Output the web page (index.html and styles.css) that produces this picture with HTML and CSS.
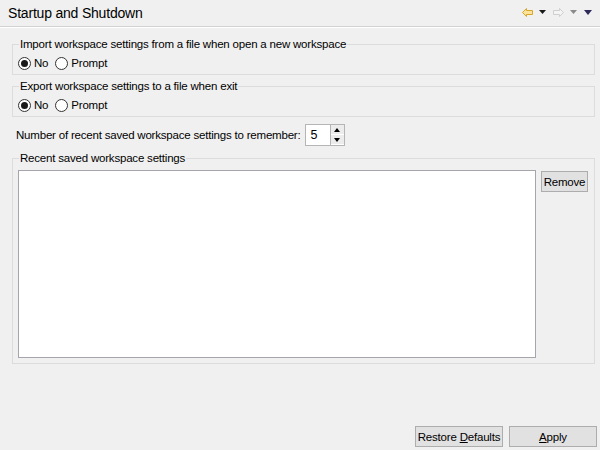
FILE: index.html
```html
<!DOCTYPE html>
<html lang="en">

<head>
    <meta charset="UTF-8">
    <title>Startup and Shutdown</title>
    <link rel="stylesheet" href="styles.css">
</head>

<body>
    <div class="page">
        <div class="header">
            <div class="title">Startup and Shutdown</div>
            <div class="nav">
                <svg width="11" height="9" viewBox="0 0 11 9">
                    <path d="M0.5 4.5 L4.5 0.5 V2.5 H10.5 V6.5 H4.5 V8.5 Z" fill="#fbe39a" stroke="#d9a62c" stroke-width="1"/>
                </svg>
                <svg class="drop" width="7" height="4" viewBox="0 0 7 4"><path d="M0 0 H7 L3.5 4 Z" fill="#1a1a1a"/></svg>
                <svg width="11" height="9" viewBox="0 0 11 9">
                    <path d="M10.5 4.5 L6.5 0.5 V2.5 H0.5 V6.5 H6.5 V8.5 Z" fill="#f4f4f4" stroke="#cfcfcf" stroke-width="1"/>
                </svg>
                <svg class="drop" width="7" height="4" viewBox="0 0 7 4"><path d="M0 0 H7 L3.5 4 Z" fill="#8a8a8a"/></svg>
                <svg class="drop" width="8" height="5" viewBox="0 0 8 5"><path d="M0 0 H8 L4 5 Z" fill="#2d2a5a"/></svg>
            </div>
        </div>

        <div class="content">
            <fieldset class="group">
                <legend>Import workspace settings from a file when open a new workspace</legend>
                <div class="radios">
                    <label><input type="radio" name="import" checked> No</label>
                    <label><input type="radio" name="import"> Prompt</label>
                </div>
            </fieldset>

            <fieldset class="group">
                <legend>Export workspace settings to a file when exit</legend>
                <div class="radios">
                    <label><input type="radio" name="export" checked> No</label>
                    <label><input type="radio" name="export"> Prompt</label>
                </div>
            </fieldset>

            <div class="remember">
                <span>Number of recent saved workspace settings to remember:</span>
                <div class="spinner">
                    <div class="spin-value">5</div>
                    <div class="spin-arrows">
                        <div class="spin-btn"><span class="up"></span></div>
                        <div class="spin-btn"><span class="down"></span></div>
                    </div>
                </div>
            </div>

            <fieldset class="group recent">
                <legend>Recent saved workspace settings</legend>
                <div class="recent-body">
                    <div class="list"></div>
                    <button class="btn remove">Remove</button>
                </div>
            </fieldset>
        </div>

        <div class="footer">
            <button class="btn wide">Restore <u>D</u>efaults</button>
            <button class="btn wide"><u>A</u>pply</button>
        </div>
    </div>
</body>

</html>
```

FILE: styles.css
```css
body {
    margin: 0;
    background-color: #f0f0f0;
    font-family: "Liberation Sans", Arial, sans-serif;
    font-size: 11.5px;
    letter-spacing: -0.2px;
    color: #000;
}

.page {
    display: flex;
    flex-direction: column;
    height: 450px;
}

.header {
    display: flex;
    justify-content: space-between;
    align-items: center;
    height: 26px;
    padding: 0 7px 0 8px;
    border-bottom: 1px solid #d2d2d2;
    box-shadow: 0 1px 0 #ffffff;
}

.title {
    font-size: 14px;
    letter-spacing: -0.2px;
    margin-top: -1px;
}

.nav {
    display: flex;
    align-items: center;
    gap: 6px;
    margin-top: -2px;
}

.nav .drop {
    margin-right: 1px;
}

.content {
    padding: 9px 5px 0 12px;
}

.group {
    margin: 0 0 3px 0;
    padding: 3px 5px 3px 5px;
    border: 1px solid #dcdcdc;
    border-radius: 0;
}

.group legend {
    padding: 0 1px;
    margin-left: 1px;
    line-height: 16px;
}

.radios {
    display: flex;
    align-items: center;
    gap: 7px;
    height: 16px;
}

.radios label {
    display: flex;
    align-items: center;
    gap: 3px;
}

.radios input {
    appearance: none;
    width: 13px;
    height: 13px;
    margin: 0;
    border: 1px solid #333;
    border-radius: 50%;
    background-color: #fff;
    position: relative;
}

.radios input:checked::after {
    content: "";
    position: absolute;
    left: 2px;
    top: 2px;
    width: 7px;
    height: 7px;
    border-radius: 50%;
    background-color: #1a1a1a;
}

.remember {
    display: flex;
    align-items: center;
    gap: 4px;
    margin: 7px 0 4px 4px;
    height: 22px;
}

.spinner {
    display: flex;
    height: 22px;
}

.spin-value {
    width: 19px;
    height: 20px;
    line-height: 20px;
    padding-left: 5px;
    font-size: 12.5px;
    background-color: #fff;
    border: 1px solid #b5b5b5;
    border-right: none;
}

.spin-arrows {
    display: flex;
    flex-direction: column;
    width: 13px;
    border: 1px solid #b5b5b5;
    background-color: #fff;
}

.spin-btn {
    flex: 1;
    display: flex;
    align-items: center;
    justify-content: center;
    background-color: #ececec;
    margin: 0 0 1px 0;
}

.up {
    width: 0;
    height: 0;
    border-left: 3px solid transparent;
    border-right: 3px solid transparent;
    border-bottom: 4px solid #000;
}

.down {
    width: 0;
    height: 0;
    border-left: 3px solid transparent;
    border-right: 3px solid transparent;
    border-top: 4px solid #000;
}

.recent {
    padding: 4px 6px 5px 5px;
}

.recent-body {
    display: flex;
    align-items: flex-start;
    gap: 5px;
}

.list {
    flex: 1;
    height: 186px;
    background-color: #fff;
    border: 1px solid #a5a5ab;
}

.btn {
    font-family: inherit;
    font-size: 11.5px;
    letter-spacing: -0.2px;
    height: 21px;
    padding: 0;
    white-space: nowrap;
    background-color: #e1e1e1;
    border: 1px solid #adadad;
    color: #000;
}

.remove {
    width: 47px;
    margin-top: 1px;
}

.footer {
    display: flex;
    justify-content: flex-end;
    gap: 6px;
    margin-top: auto;
    padding: 0 3px 3px 0;
}

.wide {
    width: 88px;
}
```
